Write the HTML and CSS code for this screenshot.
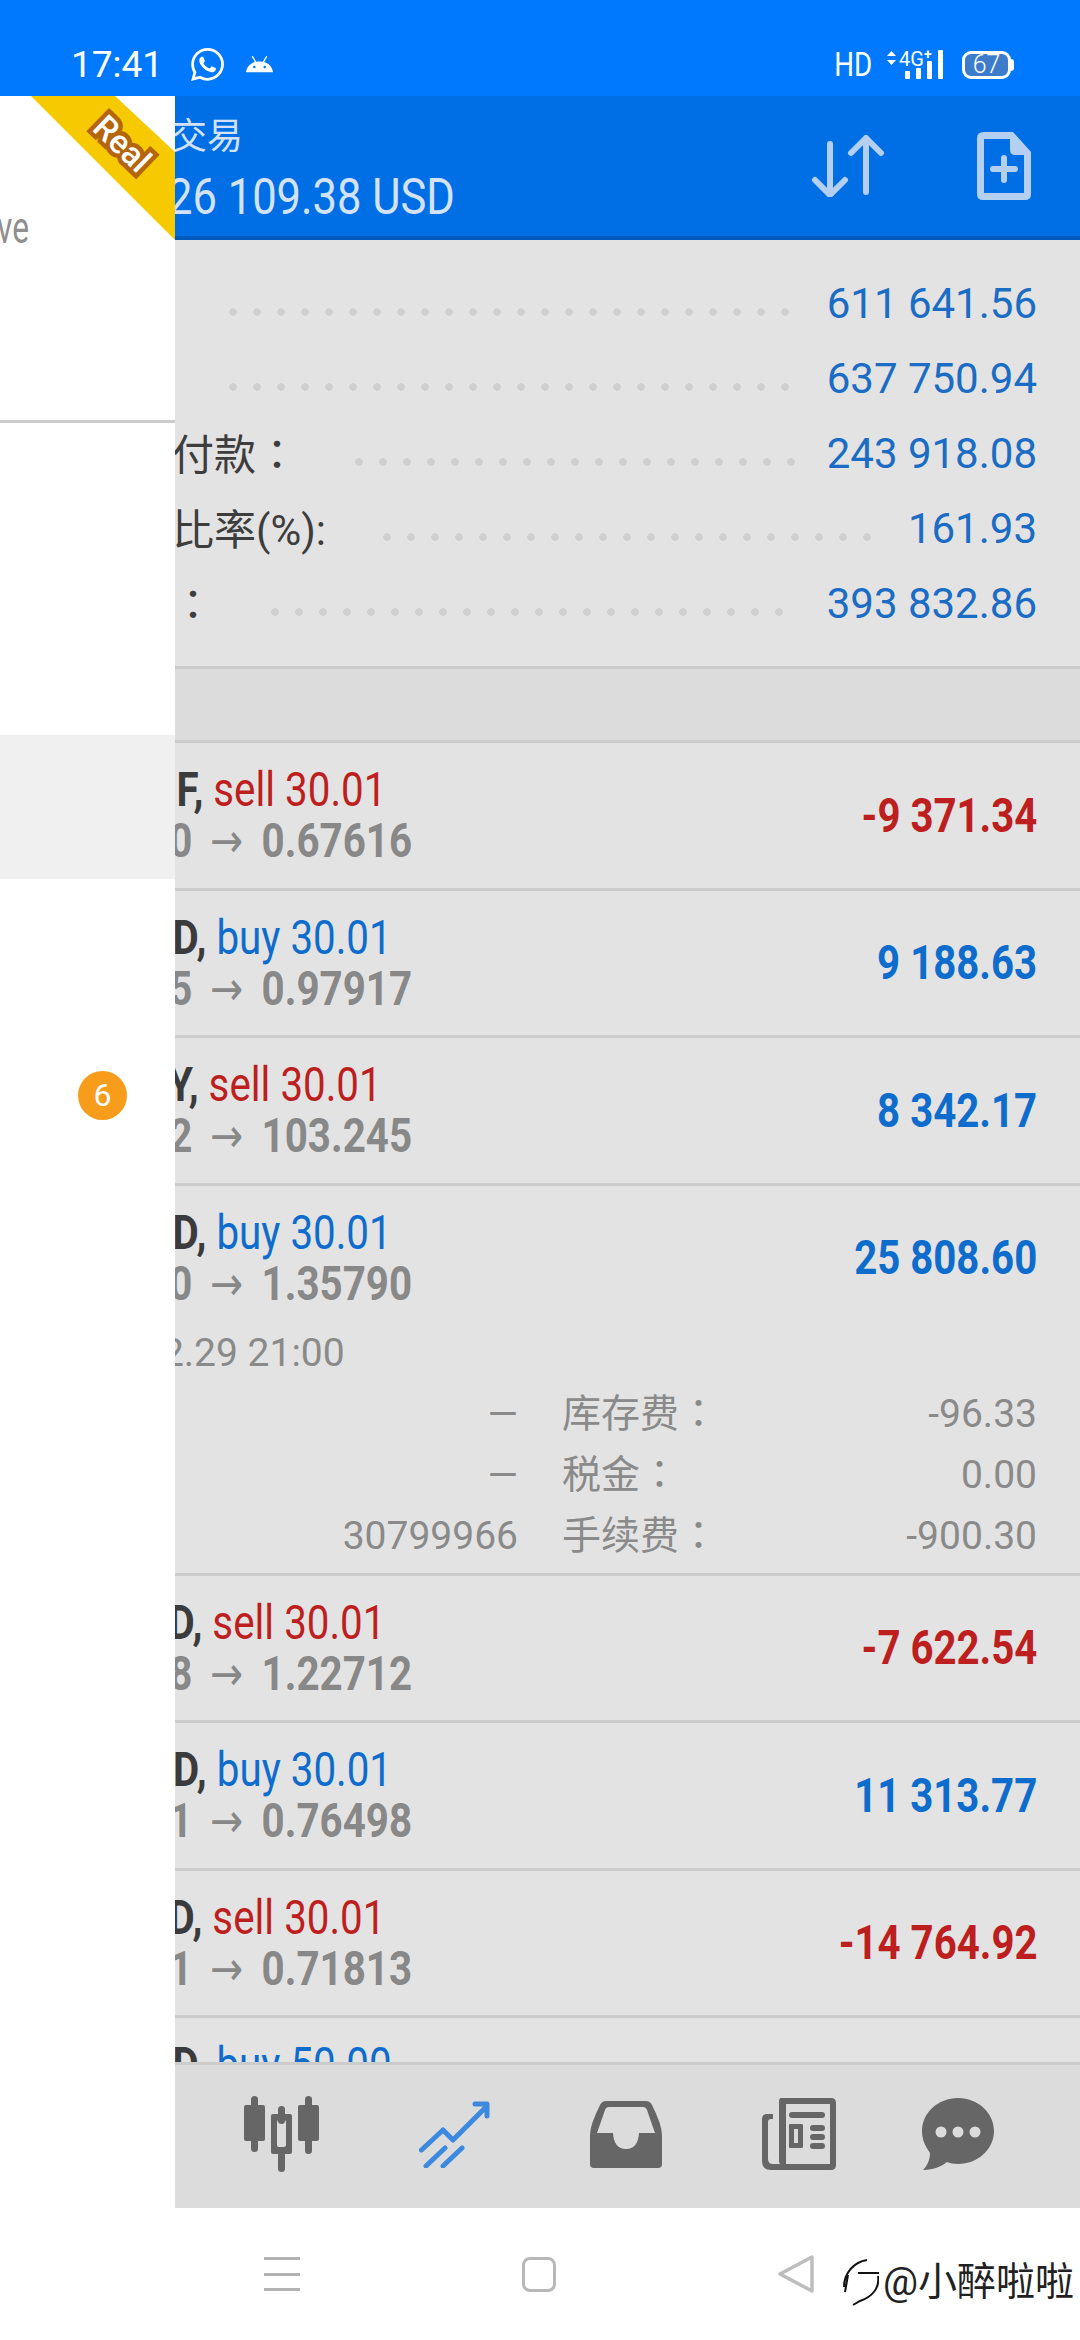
FILE: index.html
```html
<!DOCTYPE html>
<html lang="zh-TW">

<head>
  <meta charset="UTF-8">
  <meta name="viewport" content="width=device-width, initial-scale=1.0">
  <title>交易</title>
  <link rel="stylesheet" href="styles.css">
</head>

<body>
  <div class="phone">
    <div class="status-bar">
      <span class="clock">17:41</span>
      <svg class="ic-whatsapp" viewBox="0 0 24 24" fill="#fff"><path d="M17.472 14.382c-.297-.149-1.758-.867-2.03-.967-.273-.099-.471-.148-.67.15-.197.297-.767.966-.94 1.164-.173.199-.347.223-.644.075-.297-.15-1.255-.463-2.39-1.475-.883-.788-1.48-1.761-1.653-2.059-.173-.297-.018-.458.13-.606.134-.133.298-.347.446-.52.149-.174.198-.298.298-.497.099-.198.05-.371-.025-.52-.075-.149-.669-1.612-.916-2.207-.242-.579-.487-.5-.669-.51-.173-.008-.371-.01-.57-.01-.198 0-.52.074-.792.372-.272.297-1.04 1.016-1.04 2.479 0 1.462 1.065 2.875 1.213 3.074.149.198 2.096 3.2 5.077 4.487.709.306 1.262.489 1.694.625.712.227 1.36.195 1.871.118.571-.085 1.758-.719 2.006-1.413.248-.694.248-1.289.173-1.413-.074-.124-.272-.198-.57-.347m-5.421 7.403h-.004a9.87 9.87 0 01-5.031-1.378l-.361-.214-3.741.982.998-3.648-.235-.374a9.86 9.86 0 01-1.51-5.26c.001-5.45 4.436-9.884 9.888-9.884 2.64 0 5.122 1.03 6.988 2.898a9.825 9.825 0 012.893 6.994c-.003 5.45-4.437 9.884-9.885 9.884m8.413-18.297A11.815 11.815 0 0012.05 0C5.495 0 .16 5.335.157 11.892c0 2.096.547 4.142 1.588 5.945L.057 24l6.305-1.654a11.882 11.882 0 005.683 1.448h.005c6.554 0 11.89-5.335 11.893-11.893a11.821 11.821 0 00-3.48-8.413z"/></svg>
      <svg class="ic-android" viewBox="0 0 26 16"><path d="M0 15.5C.6 9.5 5.5 5 13 5s12.4 4.500 13 10.500z" fill="#fff"/><path d="M6 0l3.500 6M20 0l-3.500 6" stroke="#fff" stroke-width="1.300"/><circle cx="8" cy="10.500" r="1.200" fill="#0079fe"/><circle cx="18" cy="10.500" r="1.200" fill="#0079fe"/></svg>
      <span class="hd">HD</span>
      <svg class="ic-signal" viewBox="0 0 56 32" fill="#fff">
        <path d="M0 7l4.500-5 4.500 5zM0 11l4.500 5 4.500-5z"/>
        <text x="12" y="17" class="signal-text">4G</text>
        <text x="37" y="10" class="signal-plus">+</text>
        <rect x="18" y="22" width="5" height="8" rx="1"/>
        <rect x="29" y="19" width="5" height="11" rx="1"/>
        <rect x="40" y="12" width="5" height="18" rx="1"/>
        <rect x="51" y="1" width="5" height="29" rx="1"/>
      </svg>
      <div class="battery">67</div>
    </div>

    <header class="app-head">
      <div class="head-title">
        <div class="head-name">交易</div>
        <div class="head-profit">26 109.38 USD</div>
      </div>
      <svg class="ic-sort" viewBox="0 0 73 62" fill="none" stroke="#b4cff0" stroke-width="6" stroke-linecap="round" stroke-linejoin="round"><path d="M18 9v51M3 45l15 15 15-15M54 3v54M39 18L54 3l15 15"/></svg>
      <svg class="ic-file" viewBox="0 0 54 68"><path d="M7 0h29l18 20v42q0 6-6 6H6q-6 0-6-6V6q0-6 7-6zM7 7v54h40V23H38q-5 0-5-5V7z" fill="#b4cff0" fill-rule="evenodd"/><path d="M27 26v22M16 37h22" stroke="#b4cff0" stroke-width="6" stroke-linecap="round"/></svg>
    </header>

    <main class="content">
      <section class="summary">
        <div class="sum-row"><span class="sum-label">结余：</span><span class="dots"></span><span class="sum-value">611 641.56</span></div>
        <div class="sum-row"><span class="sum-label">净值：</span><span class="dots"></span><span class="sum-value">637 750.94</span></div>
        <div class="sum-row"><span class="sum-label">已用预付款：</span><span class="dots"></span><span class="sum-value">243 918.08</span></div>
        <div class="sum-row"><span class="sum-label">预付款比率(%):</span><span class="dots"></span><span class="sum-value">161.93</span></div>
        <div class="sum-row"><span class="sum-label">可用金：</span><span class="dots"></span><span class="sum-value">393 832.86</span></div>
      </section>
      <div class="band"></div>

      <div class="deal">
        <div class="deal-top">
          <div class="deal-main">
            <div class="deal-line"><b class="symbol">AUDCHF,</b> <span class="sell">sell 30.01</span></div>
            <div class="deal-price">0.71520 <span class="arrow">→</span> 0.67616</div>
          </div>
          <div class="amount loss">-9 371.34</div>
        </div>
      </div>

      <div class="deal">
        <div class="deal-top">
          <div class="deal-main">
            <div class="deal-line"><b class="symbol">GBPUSD,</b> <span class="buy">buy 30.01</span></div>
            <div class="deal-price">0.93985 <span class="arrow">→</span> 0.97917</div>
          </div>
          <div class="amount gain">9 188.63</div>
        </div>
      </div>

      <div class="deal">
        <div class="deal-top">
          <div class="deal-main">
            <div class="deal-line"><b class="symbol">USDJPY,</b> <span class="sell">sell 30.01</span></div>
            <div class="deal-price">106.112 <span class="arrow">→</span> 103.245</div>
          </div>
          <div class="amount gain">8 342.17</div>
        </div>
      </div>

      <div class="deal deal-open">
        <div class="deal-top">
          <div class="deal-main">
            <div class="deal-line"><b class="symbol">GBPUSD,</b> <span class="buy">buy 30.01</span></div>
            <div class="deal-price">1.27190 <span class="arrow">→</span> 1.35790</div>
          </div>
          <div class="amount gain">25 808.60</div>
        </div>
        <div class="deal-date">2020.12.29 21:00</div>
        <div class="deal-detail">
          <span class="det-label">止损：</span><span class="det-value">—</span>
          <span class="det-label">库存费：</span><span class="det-value">-96.33</span>
          <span class="det-label">止盈：</span><span class="det-value">—</span>
          <span class="det-label">税金：</span><span class="det-value">0.00</span>
          <span class="det-label">订单：</span><span class="det-value">30799966</span>
          <span class="det-label">手续费：</span><span class="det-value">-900.30</span>
        </div>
      </div>

      <div class="deal">
        <div class="deal-top">
          <div class="deal-main">
            <div class="deal-line"><b class="symbol">EURUSD,</b> <span class="sell">sell 30.01</span></div>
            <div class="deal-price">1.20178 <span class="arrow">→</span> 1.22712</div>
          </div>
          <div class="amount loss">-7 622.54</div>
        </div>
      </div>

      <div class="deal">
        <div class="deal-top">
          <div class="deal-main">
            <div class="deal-line"><b class="symbol">AUDUSD,</b> <span class="buy">buy 30.01</span></div>
            <div class="deal-price">0.72731 <span class="arrow">→</span> 0.76498</div>
          </div>
          <div class="amount gain">11 313.77</div>
        </div>
      </div>

      <div class="deal">
        <div class="deal-top">
          <div class="deal-main">
            <div class="deal-line"><b class="symbol">EURUSD,</b> <span class="sell">sell 30.01</span></div>
            <div class="deal-price">0.66901 <span class="arrow">→</span> 0.71813</div>
          </div>
          <div class="amount loss">-14 764.92</div>
        </div>
      </div>

      <div class="deal">
        <div class="deal-top">
          <div class="deal-main">
            <div class="deal-line"><b class="symbol">GBPUSD,</b> <span class="buy">buy 50.00</span></div>
          </div>
        </div>
      </div>
    </main>

    <nav class="tab-bar">
      <svg class="tab-candles" viewBox="0 0 75 76" fill="#666">
        <rect x="0" y="9" width="21" height="36" rx="2"/><rect x="7" y="0" width="7" height="56" rx="3.500"/>
        <rect x="54" y="9" width="21" height="36" rx="2"/><rect x="61" y="0" width="7" height="58" rx="3.500"/>
        <path d="M27 20q0-2 2-2h17q2 0 2 2v36q0 2-2 2H29q-2 0-2-2zM33 26v23q0 2 2 2h5q2 0 2-2V26q0-2-2-2h-5q-2 0-2 2z" fill-rule="evenodd"/>
        <rect x="34" y="10" width="7" height="18" rx="3.500"/><rect x="34" y="56" width="7" height="20" rx="3.500"/>
      </svg>
      <svg class="tab-chart" viewBox="0 0 71 67" fill="none" stroke="#3b8ae0" stroke-width="5" stroke-linecap="round" stroke-linejoin="round"><path d="M2.500 49L24 29l10 10 33-33M56 3h12v12M7 65l19-18M24 65l19-18"/></svg>
      <svg class="tab-inbox" viewBox="0 0 72 67"><path d="M16 0h40q4 0 6 4 10 20 10 30v29q0 4-4 4H4q-4 0-4-4V34Q0 24 10 4q2-4 6-4zM19 6q-3 0-4 3L7 32h16q1 16 13 16t13-16h16L57 9q-1-3-4-3z" fill="#666" fill-rule="evenodd"/></svg>
      <svg class="tab-news" viewBox="0 0 74 72"><path d="M19 0h50q5 0 5 5v62q0 5-5 5H9q-9 0-9-9V21q0-5 5-5h6v5H9q-3 0-3 3v37q0 5 5 5h7q-1-1-1-3V4q0-4 2-4zM24 6v60h44V6z" fill="#666" fill-rule="evenodd"/><rect x="27" y="14" width="36" height="6" rx="3" fill="#666"/><path d="M27 27q0-1 1-1h11q2 0 2 1v22q0 1-2 1H28q-1 0-1-1zM32 31v14h4V31z" fill="#666" fill-rule="evenodd"/><rect x="48" y="27" width="15" height="6" rx="3" fill="#666"/><rect x="48" y="36" width="15" height="6" rx="3" fill="#666"/><rect x="48" y="45" width="15" height="6" rx="3" fill="#666"/></svg>
      <svg class="tab-chat" viewBox="0 0 72 72"><path d="M36 0c20 0 36 15 36 33S56 66 36 66c-5 0-8-1-11-2-5 4-13 8-24 8 4-4 7-10 7-17C3 48 0 41 0 33 0 15 16 0 36 0z" fill="#666"/><circle cx="19" cy="34" r="5.500" fill="#dcdcdc"/><circle cx="36" cy="34" r="5.500" fill="#dcdcdc"/><circle cx="53" cy="34" r="5.500" fill="#dcdcdc"/></svg>
    </nav>

    <div class="nav-bar">
      <div class="nav-menu"><i></i><i></i><i></i></div>
      <div class="nav-home"></div>
      <svg class="nav-back" viewBox="0 0 36 38" fill="none" stroke="#bdbdbd" stroke-width="3.500" stroke-linejoin="round"><path d="M34 2v34L2 19z"/></svg>
    </div>

    <!-- drawer lies over the page, left part of the rows runs under it -->
    <aside class="drawer">
      <div class="drawer-head">
        <div class="ribbon"><span class="ribbon-text">Real</span></div>
        <div class="drawer-account">ve</div>
      </div>
      <ul class="drawer-menu">
        <li></li>
        <li></li>
        <li class="active"></li>
        <li></li>
        <li><span class="badge">6</span></li>
      </ul>
    </aside>

    <div class="watermark">
      <svg class="wm-logo" viewBox="0 0 36 48" fill="none" stroke="#111" stroke-width="2"><path d="M1 29C1 15 11 4 24 2M5 17L2 34M15 15h21M35 18c2 12-6 21-18 25l-7 4"/></svg>
      <span class="wm-text">@小醉啦啦</span>
    </div>
  </div>
</body>

</html>
```

FILE: styles.css
```css
* {
  box-sizing: border-box;
}

body {
  margin: 0;
  font-family: Roboto, "Noto Sans CJK TC", sans-serif;
  background-color: #fff;
}

.phone {
  position: relative;
  width: 1080px;
  height: 2340px;
  display: flex;
  flex-direction: column;
  overflow: hidden;
}

/* status bar */
.status-bar {
  height: 96px;
  flex: none;
  display: flex;
  align-items: center;
  padding: 33px 69px 0 71px;
  background-color: #0079fe;
  color: #fff;
}

.clock {
  font-size: 37px;
  width: 120px;
}

.ic-whatsapp {
  width: 33px;
  height: 33px;
}

.ic-android {
  width: 27px;
  height: 17px;
  margin-left: 22px;
}

.hd {
  margin-left: auto;
  font-size: 33px;
  transform: scaleX(.84);
  transform-origin: right;
}

.ic-signal {
  width: 56px;
  height: 32px;
  margin-left: 15px;
}

.signal-text {
  font-size: 20px;
  font-family: Roboto, sans-serif;
}

.signal-plus {
  font-size: 14px;
  font-family: Roboto, sans-serif;
  font-weight: bold;
}

.battery {
  position: relative;
  width: 49px;
  height: 28px;
  margin-left: 19px;
  border: 3px solid #fff;
  border-radius: 9px;
  background-color: #3c7ccb;
  text-align: center;
  font-size: 25px;
  line-height: 22px;
  font-weight: 300;
}

.battery::after {
  content: "";
  position: absolute;
  right: -6px;
  top: 5px;
  width: 3px;
  height: 12px;
  border-radius: 0 3px 3px 0;
  background-color: #fff;
}

/* app header */
.app-head {
  height: 144px;
  flex: none;
  display: flex;
  align-items: center;
  padding-right: 49px;
  background-color: #006fe6;
  border-bottom: 4px solid #0059bd;
}

.head-title {
  flex: 1;
  padding: 15px 0 0 171px;
}

.head-name {
  font-size: 36px;
  line-height: 47px;
  color: #d3e2f7;
}

.head-profit {
  font-size: 50px;
  line-height: 72px;
  color: #d3e2f7;
  margin-left: -3px;
  transform: scaleX(.87);
  transform-origin: left;
}

.ic-sort {
  width: 73px;
  height: 62px;
}

.ic-file {
  width: 54px;
  height: 68px;
  margin-left: 92px;
}

/* main list */
.content {
  flex: 1;
  min-height: 0;
  overflow: hidden;
  background-color: #e3e3e3;
}

.summary {
  padding: 26px 43px 25px 46px;
  border-bottom: 3px solid #ccc;
}

.sum-row {
  display: flex;
  height: 75px;
  align-items: center;
}

.sum-label {
  font-size: 42px;
  color: #3d3d3d;
  margin-top: -4px;
}

.dots {
  flex: 1;
  height: 8px;
  margin: 16px 28px 0 49px;
  background-image: radial-gradient(circle, #cfcfcf 3.5px, transparent 4px);
  background-size: 24px 8px;
  background-repeat: repeat-x;
}

.sum-value {
  font-size: 42px;
  color: #1a6cc4;
}

.band {
  height: 74px;
  background-color: #dcdcdc;
  border-bottom: 3px solid #ccc;
}

.deal {
  padding: 21px 43px 21.5px 42px;
  border-bottom: 3px solid #ccc;
}

.deal-top {
  display: flex;
  align-items: center;
  justify-content: space-between;
}

.deal-main {
  transform: scaleX(.84);
  transform-origin: left;
  white-space: nowrap;
}

.deal-line {
  font-size: 48px;
  line-height: 51px;
}

.symbol {
  color: #3b3b3b;
}

.sell {
  color: #bd1f1f;
}

.buy {
  color: #0d6ccc;
}

.deal-price {
  font-size: 48px;
  line-height: 51px;
  font-weight: bold;
  color: #888;
}

.arrow {
  font-family: "DejaVu Sans", sans-serif;
  font-size: 47px;
  line-height: 0;
  font-weight: normal;
  margin: 0 10px 0 9px;
}

.amount {
  font-size: 49px;
  font-weight: bold;
  transform: scaleX(.82);
  transform-origin: right;
}

.loss {
  color: #bd1f1f;
}

.gain {
  color: #0d6ccc;
}

.deal-open {
  padding-bottom: 6px;
}

.deal-date {
  margin-top: 14px;
  font-size: 39px;
  line-height: 61px;
  color: #8a8a8a;
}

.deal-detail {
  display: grid;
  grid-template-columns: 100px 376px 44px 1fr auto;
  grid-auto-rows: 61px;
  font-size: 39px;
  line-height: 61px;
  color: #8a8a8a;
}

.det-label:nth-child(4n+3) {
  grid-column: 4;
}

.det-value {
  text-align: right;
}

.det-value:nth-child(4n+4) {
  grid-column: 5;
}

/* tabs */
.tab-bar {
  height: 146px;
  flex: none;
  display: flex;
  align-items: center;
  gap: 100px;
  padding: 0 0 5px 244px;
  background-color: #dcdcdc;
  border-top: 3px solid #ccc;
}

.tab-candles {
  width: 75px;
  height: 76px;
}

.tab-chart {
  width: 71px;
  height: 67px;
}

.tab-inbox {
  width: 72px;
  height: 67px;
}

.tab-news {
  width: 74px;
  height: 72px;
}

.tab-chat {
  width: 72px;
  height: 72px;
  margin-left: -14px;
}

/* android nav */
.nav-bar {
  height: 132px;
  flex: none;
  display: flex;
  align-items: center;
  gap: 222px;
  padding-left: 264px;
  background-color: #fff;
}

.nav-menu {
  width: 36px;
  display: flex;
  flex-direction: column;
  gap: 12.5px;
}

.nav-menu i {
  display: block;
  height: 3px;
  background-color: #b3b3b3;
}

.nav-home {
  width: 34px;
  height: 35px;
  border: 3px solid #b8b8b8;
  border-radius: 8px;
}

.nav-back {
  width: 36px;
  height: 38px;
}

/* drawer */
.drawer {
  position: absolute;
  left: 0;
  top: 96px;
  width: 175px;
  height: 2112px;
  background-color: #fff;
  overflow: hidden;
}

.drawer-head {
  height: 327px;
  padding-top: 107px;
  border-bottom: 3px solid #ccc;
}

.ribbon {
  position: absolute;
  left: 0;
  top: 0;
  width: 175px;
  height: 144px;
  background-color: #f6c900;
  clip-path: polygon(31px 0, 115px 0, 175px 56px, 175px 144px);
}

.ribbon-text {
  position: absolute;
  left: 122px;
  top: 30px;
  font-size: 33px;
  font-weight: 500;
  line-height: 36px;
  color: #fff;
  -webkit-text-stroke: 9px #b5650b;
  paint-order: stroke fill;
  transform: translate(-50%, 0) rotate(44deg);
}

.drawer-account {
  font-size: 44px;
  line-height: 50px;
  color: #8f8f8f;
  margin-left: -3px;
  transform: scaleX(.72);
  transform-origin: left;
}

.drawer-menu {
  list-style-type: none;
  margin: 0;
  padding: 24px 0 0;
}

.drawer-menu li {
  height: 144px;
  display: flex;
  align-items: center;
  padding-left: 78px;
}

.drawer-menu .active {
  background-color: #f0f0f0;
}

.badge {
  width: 49px;
  height: 49px;
  border-radius: 50%;
  background-color: #f89c1c;
  color: #fff;
  font-size: 32px;
  line-height: 49px;
  text-align: center;
}

/* watermark */
.watermark {
  position: absolute;
  left: 843px;
  top: 2258px;
  display: flex;
  align-items: center;
  gap: 4px;
}

.wm-logo {
  width: 36px;
  height: 48px;
}

.wm-text {
  font-size: 39px;
  line-height: 46px;
  color: #222;
  text-shadow: 1px 1px 0 #fff;
  white-space: nowrap;
}
```
